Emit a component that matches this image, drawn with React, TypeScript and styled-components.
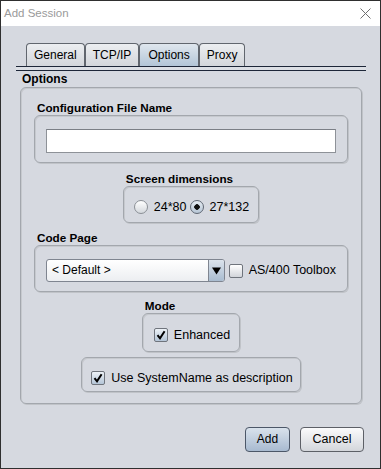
import React from "react";
import styled, { createGlobalStyle } from "styled-components";

const GlobalStyle = createGlobalStyle`
  html, body {
    margin: 0;
    padding: 0;
    background: #ffffff;
  }
  * {
    box-sizing: border-box;
  }
`;

const Frame = styled.div`
  width: 381px;
  height: 469px;
  border: 1px solid #2f2f2f;
  background: #d6d9e0;
  display: flex;
  flex-direction: column;
  font-family: "Liberation Sans", Arial, sans-serif;
  font-size: 12px;
  color: #000;
`;

const TitleBar = styled.div`
  height: 25px;
  background: #ffffff;
  display: flex;
  align-items: center;
  justify-content: space-between;
  padding: 0 9px 0 3px;
`;

const TitleText = styled.span`
  font-size: 11.5px;
  line-height: 15px;
  color: #9a9a9a;
`;

const Body = styled.div`
  flex: 1;
  display: flex;
  flex-direction: column;
  padding: 17px 14px 0 15px;
`;

const TabStrip = styled.div`
  display: flex;
  height: 23px;
  padding-left: 10px;
`;

const Tab = styled.div<{ $active?: boolean }>`
  height: 23px;
  padding: 0 ${(p) => (p.$active ? 8 : 7)}px;
  display: flex;
  align-items: center;
  line-height: 15px;
  border: 1px solid #61666e;
  border-bottom: none;
  border-radius: 4px 4px 0 0;
  background: ${(p) =>
    p.$active
      ? "linear-gradient(#dfe6ee, #b3c5d7)"
      : "linear-gradient(#eceef1, #d3d6db)"};
`;

const TabRule = styled.div`
  height: 5px;
  border-top: 1px solid #1d2638;
  border-bottom: 1px solid #1d2638;
  background: #dcdfe5;
`;

const Content = styled.div`
  padding: 0 4px;
  display: flex;
  flex-direction: column;
`;

const PaneTitle = styled.div`
  font-weight: bold;
  line-height: 15px;
  margin-top: 1px;
  padding-left: 2px;
`;

const Group = styled.div`
  border: 1px solid #a3a7ad;
  border-radius: 6px;
  box-shadow: inset 1px 1px 0 #c6c9ce, 1px 1px 0 #c0c3c8;
  padding: 12px 13px 11px;
  display: flex;
  flex-direction: column;
`;

const Section = styled.div<{ $center?: boolean; $mt?: number }>`
  display: flex;
  flex-direction: column;
  align-self: ${(p) => (p.$center ? "center" : "stretch")};
  margin-top: ${(p) => p.$mt ?? 0}px;
`;

const SectionLabel = styled.div`
  font-weight: bold;
  font-size: 11.7px;
  line-height: 15px;
  padding-left: 3px;
`;

const Inset = styled.div<{ $pad: string }>`
  border: 1px solid #a3a7ad;
  border-radius: 6px;
  box-shadow: inset 1px 1px 0 #c6c9ce, 1px 1px 0 #c0c3c8;
  padding: ${(p) => p.$pad};
  display: flex;
  align-items: center;
`;

const TextField = styled.div`
  flex: 1;
  height: 24px;
  background: #ffffff;
  border: 1px solid #8e9298;
  border-top-color: #7b7f86;
`;

const Option = styled.label<{ $gap?: number; $h?: number }>`
  display: flex;
  align-items: center;
  gap: 6px;
  font-size: 12.5px;
  line-height: 15px;
  height: ${(p) => p.$h ?? 14}px;
  margin-right: ${(p) => p.$gap ?? 0}px;
  white-space: nowrap;
`;

const RadioDot = styled.span<{ $on?: boolean }>`
  width: 14px;
  height: 14px;
  border-radius: 50%;
  border: 1px solid ${(p) => (p.$on ? "#5f6773" : "#8b9096")};
  background: ${(p) =>
    p.$on
      ? "radial-gradient(circle at center, #111 0 2.5px, transparent 3px), linear-gradient(#e6ecf2, #b6c5d5)"
      : "linear-gradient(#ffffff, #d4d8dd)"};
  flex: none;
`;

const CheckBox = styled.span<{ $on?: boolean }>`
  width: 14px;
  height: 14px;
  border-radius: 2px;
  border: 1px solid #6f747c;
  background: ${(p) =>
    p.$on
      ? "linear-gradient(#edf2f7, #b4c5d7)"
      : "linear-gradient(#ffffff, #d2d5da)"};
  display: flex;
  align-items: center;
  justify-content: center;
  flex: none;
`;

const Combo = styled.div`
  width: 182px;
  height: 23px;
  border: 1px solid #7f8590;
  border-radius: 3px;
  background: linear-gradient(#ffffff, #eceef1);
  display: flex;
  align-items: stretch;
  overflow: hidden;
  margin-right: 4px;
`;

const ComboText = styled.span`
  flex: 1;
  padding-left: 5px;
  display: flex;
  align-items: center;
  line-height: 15px;
`;

const ComboArrow = styled.span`
  width: 16px;
  border-left: 1px solid #7f8590;
  background: linear-gradient(#dbe3ec, #a9bcd0);
  display: flex;
  align-items: center;
  justify-content: center;
`;

const Footer = styled.div`
  display: flex;
  justify-content: flex-end;
  gap: 10px;
  margin-top: 23px;
  padding-right: 2px;
`;

const Button = styled.div<{ $primary?: boolean; $w: number }>`
  width: ${(p) => p.$w}px;
  height: 25px;
  display: flex;
  align-items: center;
  justify-content: center;
  font-size: ${(p) => (p.$primary ? 12 : 12.5)}px;
  line-height: 15px;
  border-radius: 4px;
  border: 1px solid ${(p) => (p.$primary ? "#4c5768" : "#5d6067")};
  background: ${(p) =>
    p.$primary
      ? "linear-gradient(#d9e2ec, #a8bad0)"
      : "linear-gradient(#fbfbfc, #d3d6db)"};
`;

const Tick = () => (
  <svg width="10" height="10" viewBox="0 0 10 10">
    <path d="M1.5 5.2 L4 8.3 L8.6 1.2" fill="none" stroke="#000" strokeWidth="2" />
  </svg>
);

const CloseIcon = () => (
  <svg width="11" height="11" viewBox="0 0 11 11">
    <path d="M0.5 0.5 L10.5 10.5 M10.5 0.5 L0.5 10.5" stroke="#707070" strokeWidth="1" />
  </svg>
);

const Triangle = () => (
  <svg width="9" height="8" viewBox="0 0 9 8">
    <path d="M0 0.5 H9 L4.5 7.5 Z" fill="#000" />
  </svg>
);

const tabs = ["General", "TCP/IP", "Options", "Proxy"];

export default function App() {
  return (
    <>
      <GlobalStyle />
      <Frame>
        <TitleBar>
          <TitleText>Add Session</TitleText>
          <CloseIcon />
        </TitleBar>
        <Body>
          <TabStrip>
            {tabs.map((t) => (
              <Tab key={t} $active={t === "Options"}>
                {t}
              </Tab>
            ))}
          </TabStrip>
          <TabRule />
          <Content>
            <PaneTitle>Options</PaneTitle>
            <Group>
              <Section>
                <SectionLabel>Configuration File Name</SectionLabel>
                <Inset $pad="13px 11px 9px">
                  <TextField />
                </Inset>
              </Section>

              <Section $center $mt={8}>
                <SectionLabel>Screen dimensions</SectionLabel>
                <Inset $pad="13px 9px 8px 10px">
                  <Option $gap={3}>
                    <RadioDot />
                    24*80
                  </Option>
                  <Option>
                    <RadioDot $on />
                    27*132
                  </Option>
                </Inset>
              </Section>

              <Section $mt={7}>
                <SectionLabel>Code Page</SectionLabel>
                <Inset $pad="13px 11px 9px">
                  <Combo>
                    <ComboText>&lt; Default &gt;</ComboText>
                    <ComboArrow>
                      <Triangle />
                    </ComboArrow>
                  </Combo>
                  <Option>
                    <CheckBox />
                    AS/400 Toolbox
                  </Option>
                </Inset>
              </Section>

              <Section $center $mt={6}>
                <SectionLabel>Mode</SectionLabel>
                <Inset $pad="13px 9px 8px 11px">
                  <Option $h={16}>
                    <CheckBox $on>
                      <Tick />
                    </CheckBox>
                    Enhanced
                  </Option>
                </Inset>
              </Section>

              <Section $center $mt={5}>
                <Inset $pad="13px 7px 6px 9px">
                  <Option>
                    <CheckBox $on>
                      <Tick />
                    </CheckBox>
                    Use SystemName as description
                  </Option>
                </Inset>
              </Section>
            </Group>
          </Content>
          <Footer>
            <Button $primary $w={45}>
              Add
            </Button>
            <Button $w={64}>Cancel</Button>
          </Footer>
        </Body>
      </Frame>
    </>
  );
}
